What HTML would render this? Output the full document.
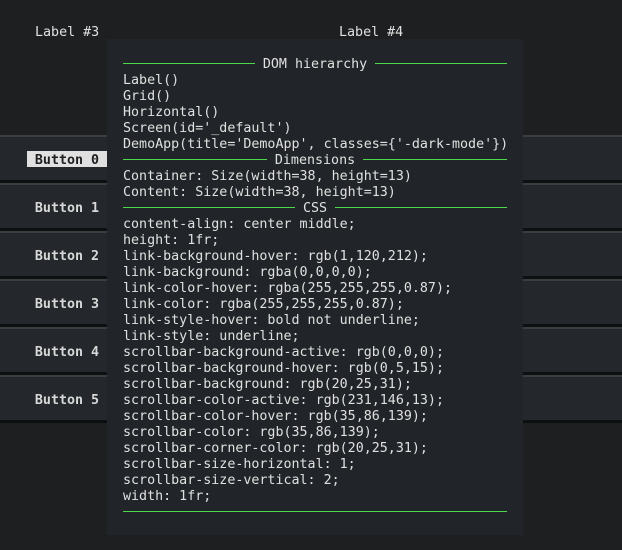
<!DOCTYPE html>
<html><head><meta charset="utf-8"><style>
body{margin:0;width:622px;height:550px;background:#1e1f21;overflow:hidden;position:relative;font-family:"DejaVu Sans Mono","Liberation Mono",monospace;font-size:13.33px;line-height:16px;color:#e0e0e0}
.a{position:absolute;white-space:pre}
.row{position:absolute;left:0;width:622px;height:48px;background:#24272b;border-top:2px solid #3b3e42;border-bottom:3px solid #0e0f10;box-sizing:border-box}
.btn{position:absolute;left:27px;width:80px;height:16px;text-align:center;font-weight:bold;color:#d8d8d8}
.btn span{position:relative;top:2px}
#panel{position:absolute;left:107px;top:39px;width:416px;height:496px;background:#212428}
.rule{position:absolute;left:16px;width:384px;height:16px;display:flex;align-items:center}
.rule i{flex:1;height:1px;background:#4cd84c}
.rule span{padding:0 8px;white-space:pre;position:relative;top:2px}
.t{position:absolute;left:16px;white-space:pre}
</style></head><body>
<div class="a" style="left:35px;top:25px">Label #3</div>
<div class="a" style="left:339px;top:25px">Label #4</div>
<div class="row" style="top:135px"></div>
<div class="row" style="top:183px"></div>
<div class="row" style="top:231px"></div>
<div class="row" style="top:279px"></div>
<div class="row" style="top:327px"></div>
<div class="row" style="top:375px"></div>
<div class="btn" style="top:151px;background:#e0e0e0;color:#1e1f21"><span>Button 0</span></div>
<div class="btn" style="top:199px"><span>Button 1</span></div>
<div class="btn" style="top:247px"><span>Button 2</span></div>
<div class="btn" style="top:295px"><span>Button 3</span></div>
<div class="btn" style="top:343px"><span>Button 4</span></div>
<div class="btn" style="top:391px"><span>Button 5</span></div>
<div id="panel">
<div class="rule" style="top:16px"><i></i><span>DOM hierarchy</span><i></i></div>
<div class="t" style="top:34px">Label()
Grid()
Horizontal()
Screen(id='_default')
DemoApp(title='DemoApp', classes={'-dark-mode'})</div>
<div class="rule" style="top:112px"><i></i><span>Dimensions</span><i></i></div>
<div class="t" style="top:130px">Container: Size(width=38, height=13)
Content: Size(width=38, height=13)</div>
<div class="rule" style="top:160px"><i></i><span>CSS</span><i></i></div>
<div class="t" style="top:178px">content-align: center middle;
height: 1fr;
link-background-hover: rgb(1,120,212);
link-background: rgba(0,0,0,0);
link-color-hover: rgba(255,255,255,0.87);
link-color: rgba(255,255,255,0.87);
link-style-hover: bold not underline;
link-style: underline;
scrollbar-background-active: rgb(0,0,0);
scrollbar-background-hover: rgb(0,5,15);
scrollbar-background: rgb(20,25,31);
scrollbar-color-active: rgb(231,146,13);
scrollbar-color-hover: rgb(35,86,139);
scrollbar-color: rgb(35,86,139);
scrollbar-corner-color: rgb(20,25,31);
scrollbar-size-horizontal: 1;
scrollbar-size-vertical: 2;
width: 1fr;</div>
<div class="rule" style="top:464px"><i></i></div>
</div>
</body></html>
